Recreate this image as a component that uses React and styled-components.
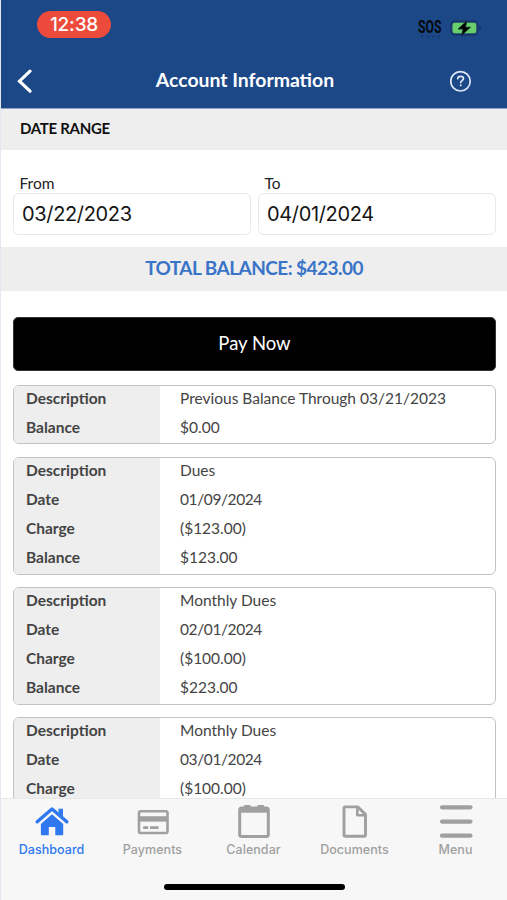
import styled, { createGlobalStyle } from "styled-components";

const transactions = [
    [
        ["Description", "Previous Balance Through 03/21/2023"],
        ["Balance", "$0.00"],
    ],
    [
        ["Description", "Dues"],
        ["Date", "01/09/2024"],
        ["Charge", "($123.00)"],
        ["Balance", "$123.00"],
    ],
    [
        ["Description", "Monthly Dues"],
        ["Date", "02/01/2024"],
        ["Charge", "($100.00)"],
        ["Balance", "$223.00"],
    ],
    [
        ["Description", "Monthly Dues"],
        ["Date", "03/01/2024"],
        ["Charge", "($100.00)"],
    ],
];

const tabs = [
    { label: "Dashboard", icon: <HomeIcon />, active: true },
    { label: "Payments", icon: <CardIcon /> },
    { label: "Calendar", icon: <CalendarIcon /> },
    { label: "Documents", icon: <DocumentIcon /> },
    { label: "Menu", icon: <MenuIcon /> },
];

export default function App() {
    return (
        <Screen>
            <GlobalStyle />
            <Header>
                <StatusBar>
                    <TimePill>12:38</TimePill>
                    <StatusRight>
                        <Signal>
                            <Sos>SOS</Sos>
                            <SignalDots />
                        </Signal>
                        <BatteryIcon />
                    </StatusRight>
                </StatusBar>
                <NavBar>
                    <BackIcon />
                    <Title>Account Information</Title>
                    <HelpIcon />
                </NavBar>
            </Header>
            <SectionBand>DATE RANGE</SectionBand>
            <DateRow>
                <Field>
                    <FieldLabel>From</FieldLabel>
                    <DateInput>03/22/2023</DateInput>
                </Field>
                <Field>
                    <FieldLabel>To</FieldLabel>
                    <DateInput>04/01/2024</DateInput>
                </Field>
            </DateRow>
            <BalanceBand>TOTAL BALANCE: $423.00</BalanceBand>
            <Body>
                <PayButton>Pay Now</PayButton>
                {transactions.map((rows, i) => (
                    <Card key={i}>
                        {rows.map(([label, value]) => (
                            <Row key={label}>
                                <RowLabel>{label}</RowLabel>
                                <RowValue $tight={label === "Date"}>{value}</RowValue>
                            </Row>
                        ))}
                    </Card>
                ))}
            </Body>
            <Footer>
                <TabBar>
                    {tabs.map((tab) => (
                        <Tab key={tab.label} $active={tab.active}>
                            {tab.icon}
                            <TabLabel>{tab.label}</TabLabel>
                        </Tab>
                    ))}
                </TabBar>
                <HomeIndicator />
            </Footer>
        </Screen>
    );
}

function BackIcon() {
    return (
        <svg width="16" height="26" viewBox="0 0 16 26" fill="none" stroke="#fff" strokeWidth="3.2" strokeLinecap="round">
            <path d="M14 3.200 3.500 13.200 14 23.200" />
        </svg>
    );
}

function HelpIcon() {
    return (
        <svg width="22" height="22" viewBox="0 0 22 22" fill="none" stroke="#dfe8f7" strokeWidth="1.7" strokeLinecap="round">
            <circle cx="10.500" cy="11.300" r="9.700" />
            <path d="M7.700 8.700c.1-1.500 1.200-2.400 2.900-2.400s2.900.9 2.900 2.300c0 2-2.800 2-2.800 4" />
            <circle cx="10.600" cy="15.300" r=".5" fill="#dfe8f7" strokeWidth="1" />
        </svg>
    );
}

function SignalDots() {
    return (
        <svg width="24" height="3" viewBox="0 0 24 3" fill="#173a72">
            <circle cx="4" cy="1.500" r="1.300" />
            <circle cx="9.500" cy="1.500" r="1.300" />
            <circle cx="15" cy="1.500" r="1.300" />
            <circle cx="20.500" cy="1.500" r="1.300" />
        </svg>
    );
}

function BatteryIcon() {
    return (
        <svg width="33" height="16" viewBox="0 0 33 16">
            <rect x=".8" y="1" width="26.800" height="14" rx="4" fill="#1c4270" stroke="#17366b" strokeWidth="1.500" />
            <rect x="2.500" y="2.700" width="23.800" height="10.600" rx="2.200" fill="#68cf6c" />
            <path d="M29.300 5.500c1.300.4 1.900 1.400 1.900 2.500s-.6 2.100-1.900 2.500z" fill="#17366b" />
            <path d="M16.800 1 8 9h5l-1.300 6.300L20.500 7.200h-5z" fill="#000" stroke="#0c2a2a" strokeWidth=".8" strokeLinejoin="round" />
        </svg>
    );
}

function HomeIcon() {
    return (
        <svg width="36" height="36" viewBox="0 0 36 36">
            <path d="M24.500 5.800h4.500v8.500l-4.500-4z" fill="currentColor" />
            <path d="m3.200 18.800 14.800-12.800 14.800 12.800" fill="none" stroke="currentColor" strokeWidth="3.400" strokeLinecap="round" strokeLinejoin="round" />
            <path d="M18 11.300 29.200 21v10.300a1 1 0 0 1-1 1h-6.900v-8.400h-6.500v8.400H7.900a1 1 0 0 1-1-1V21z" fill="currentColor" />
        </svg>
    );
}

function CardIcon() {
    return (
        <svg width="36" height="36" viewBox="0 0 36 36" fill="none" stroke="currentColor">
            <rect x="4" y="8.200" width="28.500" height="21.800" rx="1.800" strokeWidth="2.600" />
            <path d="M4 15.900h28.500" strokeWidth="5.400" />
            <path d="M8.200 24.600h5M15 24.600h8.500" strokeWidth="2.800" />
        </svg>
    );
}

function CalendarIcon() {
    return (
        <svg width="36" height="36" viewBox="0 0 36 36" fill="none" stroke="currentColor">
            <rect x="3.700" y="5" width="28.600" height="28.400" rx="2" strokeWidth="3" />
            <path d="M4 7h28" strokeWidth="5.400" />
            <path d="M9 3.200h4.500M22.500 3.200H27" strokeWidth="2.400" strokeLinecap="round" />
        </svg>
    );
}

function DocumentIcon() {
    return (
        <svg width="36" height="36" viewBox="0 0 36 36" fill="none" stroke="currentColor" strokeWidth="2.900" strokeLinejoin="round">
            <path d="M8.200 3.900h12.500l7.800 7.500v20.700a1.200 1.200 0 0 1-1.200 1.200H8.200a1.200 1.200 0 0 1-1.200-1.200V5.100a1.200 1.200 0 0 1 1.200-1.200z" />
            <path d="M20.300 4v8.300h8" strokeWidth="2.600" />
        </svg>
    );
}

function MenuIcon() {
    return (
        <svg width="36" height="36" viewBox="0 0 36 36" fill="none" stroke="currentColor" strokeWidth="4.200" strokeLinecap="round">
            <path d="M4 4.300h28.500M4 18.600h28.500M4 32.700h28.500" />
        </svg>
    );
}

const GlobalStyle = createGlobalStyle`
* {
    box-sizing: border-box;
}

body {
    margin: 0;
    background: #fff;
    overflow: hidden;
}
`;

const Screen = styled.div`
display: flex;
flex-direction: column;
width: 507px;
height: 900px;
overflow: hidden;
border-left: 1px solid #e3e7f0;
background: #fff;
font-family: Lato, "Liberation Sans", sans-serif;
white-space: nowrap;
`;

const Header = styled.header`
flex: none;
height: 109px;
padding: 11px 0 0;
background: #1c4888;
border-bottom: 1px solid #8fa2c6;
`;

const StatusBar = styled.div`
display: flex;
justify-content: space-between;
height: 27px;
padding: 0 24px 0 36px;
`;

const TimePill = styled.div`
width: 74px;
height: 27px;
border-radius: 14px;
background: #ec4b3c;
color: #fff;
font: 500 19px/27px Inter, sans-serif;
letter-spacing: -0.2px;
text-align: center;
`;

const StatusRight = styled.div`
display: flex;
align-items: flex-start;
gap: 6px;
padding-top: 9px;
`;

const Signal = styled.div`
display: flex;
flex-direction: column;
width: 26px;
`;

const Sos = styled.span`
color: #05080f;
font: 700 17.5px/15px Roboto, sans-serif;
transform: scaleX(0.7);
transform-origin: left;
`;

const NavBar = styled.div`
display: flex;
align-items: center;
justify-content: space-between;
height: 26px;
margin-top: 30px;
padding: 0 35px 0 15px;
`;

const Title = styled.h1`
margin: 0 0 3px 8px;
color: #fff;
font-size: 19.4px;
font-weight: 700;
`;

const SectionBand = styled.div`
flex: none;
height: 41px;
padding-left: 19px;
background: #eee;
color: #111;
font-size: 15px;
font-weight: 700;
letter-spacing: -0.3px;
line-height: 39px;
`;

const DateRow = styled.div`
flex: none;
display: grid;
grid-template-columns: 238px 238px;
gap: 7px;
height: 97px;
padding: 23px 0 0 12px;
`;

const Field = styled.div`
display: flex;
flex-direction: column;
`;

const FieldLabel = styled.label`
height: 20px;
padding-left: 6.5px;
color: #222;
font-size: 15.5px;
line-height: 21px;
`;

const DateInput = styled.div`
height: 42px;
padding-left: 8px;
border: 1px solid #e9e9e9;
border-radius: 6px;
color: #151515;
font: 400 20px/41px Inter, sans-serif;
letter-spacing: -0.35px;
`;

const BalanceBand = styled.div`
flex: none;
height: 44px;
background: #eee;
color: #3a74c8;
font-size: 19px;
font-weight: 700;
letter-spacing: -0.55px;
line-height: 42px;
text-align: center;
`;

const Body = styled.main`
flex: 1;
min-height: 0;
padding: 26px 11px 0 12px;
overflow: hidden;
`;

const PayButton = styled.button`
display: block;
width: 100%;
height: 54px;
margin-bottom: 14px;
padding: 0 0 3px;
border: 1px solid #333;
border-radius: 5px;
background: #000;
color: #fff;
font: 400 18.5px Lato, sans-serif;
`;

const Card = styled.section`
margin-bottom: 12.4px;
border: 1px solid #c2c2c2;
border-radius: 6px;
overflow: hidden;
`;

const Row = styled.div`
display: grid;
grid-template-columns: 146px 1fr;
height: 29.2px;
color: #444;
font-size: 15.5px;
line-height: 25.4px;

&:last-child {
    height: 28.2px;
}
`;

const RowLabel = styled.div`
padding-left: 12px;
background: #eee;
font-weight: 700;
`;

const RowValue = styled.div`
padding-left: 20px;
letter-spacing: ${(props) => (props.$tight ? "-0.4px" : "0")};
`;

const Footer = styled.footer`
flex: none;
height: 102px;
border-top: 1px solid #e8e8e8;
background: #f7f7f7;
`;

const TabBar = styled.nav`
display: grid;
grid-template-columns: repeat(5, 101px);
height: 85px;
padding-top: 4px;
`;

const Tab = styled.div`
display: flex;
flex-direction: column;
align-items: center;
color: ${(props) => (props.$active ? "#2f78f0" : "#a0a0a0")};
`;

const TabLabel = styled.span`
margin-top: 2px;
font: 500 12.5px/17px Inter, sans-serif;
letter-spacing: 0.05px;
`;

const HomeIndicator = styled.div`
width: 181px;
height: 6px;
margin: 0 auto;
border-radius: 3px;
background: #000;
`;
